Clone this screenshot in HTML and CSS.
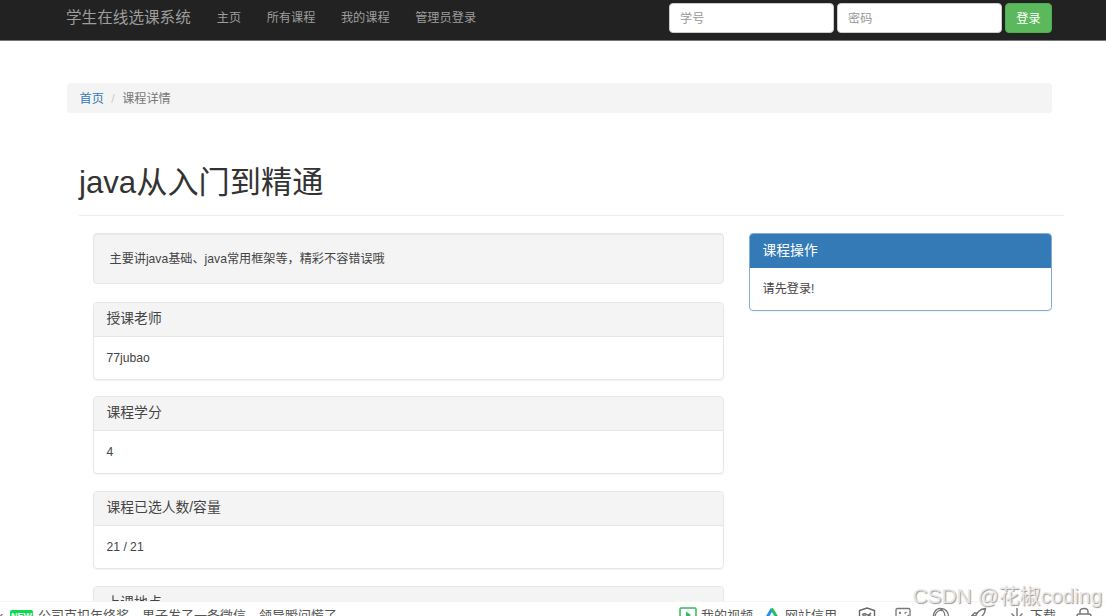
FILE: index.html
```
<!DOCTYPE html>
<html lang="zh-CN">
<head>
<meta charset="UTF-8">
<title>学生在线选课系统</title>
<link rel="stylesheet" href="styles.css">
</head>
<body>

<!-- Navigation -->
<nav class="navbar">
  <a class="brand" href="#">学生在线选课系统</a>
  <ul class="nav-links">
    <li><a href="#">主页</a></li>
    <li><a href="#">所有课程</a></li>
    <li><a href="#">我的课程</a></li>
    <li><a href="#">管理员登录</a></li>
  </ul>
  <form class="login-form">
    <input type="text" class="form-control" placeholder="学号">
    <input type="password" class="form-control" placeholder="密码">
    <button type="button" class="btn">登录</button>
  </form>
</nav>

<main class="page">
  <div class="breadcrumb">
    <a href="#">首页</a><span class="divider">/</span><span>课程详情</span>
  </div>

  <h1 class="page-header">java从入门到精通</h1>

  <div class="row">
    <!-- Course info -->
    <div class="course">
      <div class="well">主要讲java基础、java常用框架等，精彩不容错误哦</div>
      <div class="panel">
        <h3 class="panel-heading">授课老师</h3>
        <div class="panel-body">77jubao</div>
      </div>
      <div class="panel">
        <h3 class="panel-heading">课程学分</h3>
        <div class="panel-body">4</div>
      </div>
      <div class="panel">
        <h3 class="panel-heading">课程已选人数/容量</h3>
        <div class="panel-body">21 / 21</div>
      </div>
      <div class="panel">
        <h3 class="panel-heading">上课地点</h3>
        <div class="panel-body"></div>
      </div>
    </div>

    <!-- Course actions -->
    <div class="side">
      <div class="panel panel-primary">
        <h3 class="panel-heading">课程操作</h3>
        <div class="panel-body">请先登录!</div>
      </div>
    </div>
  </div>
</main>

<!-- Browser status bar -->
<footer class="statusbar">
  <div class="news">
    <span class="arrow">‹</span>
    <span class="new-tag">NEW</span>
    <span>公司克扣年终奖，男子发了一条微信，领导瞬间慌了</span>
  </div>
  <div class="tools">
    <svg class="tool-video" width="18" height="16" viewBox="0 0 18 16" fill="none" stroke="#2dbe60" stroke-width="1.5"><rect x="1" y="1" width="16" height="14" rx="1"/><path d="M7 4.500l5 3.500-5 3.500z" fill="#2dbe60" stroke="none"/></svg>
    <span class="tool-label label-video">我的视频</span>
    <svg class="tool-credit" width="14" height="16" viewBox="0 0 14 16" fill="none" stroke-width="3"><path d="M1 12L7 2" stroke="#2b8df0"/><path d="M6.500 1.500L13 12" stroke="#25c063"/></svg>
    <span class="tool-label label-credit">网站信用</span>
    <svg class="tool-shield" width="18" height="18" viewBox="0 0 18 18" fill="none" stroke="#666" stroke-width="1.400"><path d="M9 1l7.500 2.500v6c0 3-3.500 5.500-7.500 7.500-4-2-7.500-4.500-7.500-7.500v-6z"/><path d="M4.500 8.500c0-2.500 3-2 4-1s3 .5 4.500-1.500M5 9h3M10 9h3"/></svg>
    <svg class="tool-image" width="16" height="16" viewBox="0 0 16 16" fill="none" stroke="#777" stroke-width="1.300"><rect x="1" y="1.500" width="14" height="13" rx="1.500"/><path d="M2 13l4-3 3 2 5-4"/><circle cx="5" cy="6" r=".5"/><path d="M9.500 6.500l2-1.500"/></svg>
    <svg class="tool-ie" width="18" height="16" viewBox="0 0 18 16" fill="none" stroke="#777" stroke-width="1.300"><path d="M3 13C-1 7 4 1 9 1.500c5 0 7.500 4 7.500 8M3 9C4 5 7 3 10 3.500M8 2c3 1 5 4 5 8"/></svg>
    <svg class="tool-rocket" width="16" height="16" viewBox="0 0 16 16" fill="none" stroke="#777" stroke-width="1.400"><path d="M14.500 1.500C10 2 6 5 4.500 9.500L7 12c4-2 7-5 7.500-10.500zM7 6H3.500L1 8.500l4 .5M11 9.500v3L8 14"/></svg>
    <svg class="tool-download" width="14" height="16" viewBox="0 0 14 16" fill="none" stroke="#777" stroke-width="1.400"><path d="M7 1v11M1.500 6.500L7 12l5.500-5.500"/></svg>
    <span class="tool-label label-download">下载</span>
    <svg class="tool-lock" width="16" height="16" viewBox="0 0 16 16" fill="none" stroke="#777" stroke-width="1.400"><path d="M4 7V4.500Q4 1.500 8 1.500t4 3V7"/><rect x="1" y="7" width="14" height="8" rx="2"/></svg>
  </div>
</footer>

<div class="watermark">CSDN @花椒coding</div>

</body>
</html>
```
FILE: styles.css
```
* {
  box-sizing: border-box;
}
body {
  font-family: "Liberation Sans", "Noto Sans CJK SC", sans-serif;
  font-size: 12.15px;
  line-height: 17px;
  color: #444;
  background-color: #fff;
  margin: 0;
  height: 616px;
  overflow: hidden;
  display: flex;
  flex-direction: column;
}
a {
  color: #337ab7;
  text-decoration: none;
}

/* Navbar */
.navbar {
  flex: none;
  display: flex;
  height: 41px;
  padding: 0 54px 0 66px;
  background-color: #222;
  border-bottom: 1px solid #777;
}
.navbar a {
  color: #9d9d9d;
}
.brand {
  font-size: 15.6px;
  line-height: 36px;
}
.nav-links {
  display: flex;
  gap: 25.5px;
  list-style: none;
  margin: 0 0 0 26px;
  padding: 0;
  font-size: 12.2px;
  line-height: 37px;
}
.login-form {
  display: flex;
  gap: 3px;
  margin-left: auto;
  padding-top: 3px;
}
.form-control {
  width: 165px;
  height: 30px;
  padding: 1px 10px 0;
  font: inherit;
  border: 1px solid #ccc;
  border-radius: 4px;
}
.form-control::placeholder {
  color: #999;
}
.btn {
  width: 47px;
  height: 30px;
  padding: 2px 0 0;
  font: inherit;
  color: #fff;
  background-color: #5cb85c;
  border: 1px solid #4cae4c;
  border-radius: 4px;
}

/* Page */
.page {
  height: 560px;
  overflow: hidden;
  padding: 42px 54px 0 67px;
}
.breadcrumb {
  height: 30px;
  padding: 0 12.5px;
  line-height: 32px;
  color: #777;
  background-color: #f4f4f4;
  border-radius: 4px;
}
.divider {
  padding: 0 7.5px;
  color: #ccc;
}
.page-header {
  height: 69px;
  margin: 34px -12px 17px 12px;
  color: #333;
  font-size: 31.2px;
  font-weight: 400;
  line-height: 71px;
  border-bottom: 1px solid #eee;
}
.row {
  display: flex;
  justify-content: space-between;
  padding-left: 26px;
}
.course {
  width: 631px;
}
.side {
  width: 303px;
}
.well {
  height: 51px;
  margin-bottom: 17.7px;
  padding: 17px 16px 0 15.5px;
  background-color: #f4f4f4;
  border: 1px solid #e6e6e6;
  border-radius: 4px;
  box-shadow: inset 0 1px 1px rgba(0, 0, 0, .05);
}
.panel {
  height: 78px;
  margin-bottom: 16.8px;
  border: 1px solid #e6e6e6;
  border-radius: 4px;
  box-shadow: 0 1px 1px rgba(0, 0, 0, .05);
}
.panel-heading {
  height: 34px;
  margin: 0;
  padding-left: 12.5px;
  font-size: 13.8px;
  font-weight: 400;
  line-height: 32px;
  background-color: #f4f4f4;
  border-bottom: 1px solid #e6e6e6;
  border-radius: 3px 3px 0 0;
}
.panel-body {
  padding: 13px 12.5px;
}
.panel-primary {
  border-color: #7fadd4;
}
.panel-primary .panel-heading {
  line-height: 33px;
  color: #fff;
  background-color: #337ab7;
  border-color: #337ab7;
}

/* Status bar */
.statusbar {
  flex: none;
  display: flex;
  justify-content: space-between;
  height: 15px;
  overflow: hidden;
  padding: 0 14px 0 0;
  color: #555;
  line-height: 18px;
  border-top: 1px solid #f4f4f4;
}
.news {
  display: flex;
  padding-top: 5px;
  font-size: 13px;
}
.arrow {
  width: 10px;
  margin-left: -1px;
}
.new-tag {
  width: 23px;
  height: 13px;
  margin: 3px 5px 0 1px;
  color: #fff;
  background-color: #0cda50;
  border-radius: 2px;
  font-size: 9px;
  font-weight: 700;
  line-height: 13px;
  text-align: center;
}
.tools {
  display: flex;
  padding-top: 5px;
}
.tools svg {
  flex: none;
}
.tool-label {
  font-size: 13px;
  line-height: 18px;
  white-space: nowrap;
}
.label-video {
  margin: 0 12px 0 4px;
}
.label-credit {
  margin: 0 21px 0 6px;
}
.tool-shield {
  margin-right: 19px;
}
.tool-image {
  margin-right: 21px;
}
.tool-ie {
  margin-right: 21px;
}
.tool-rocket {
  margin-right: 23px;
}
.tool-download {
  margin-right: 6px;
}
.label-download {
  margin-right: 20px;
}

/* Overlay text on the corner of the page */
.watermark {
  position: absolute;
  right: 4px;
  bottom: 5px;
  color: rgba(235, 235, 235, .9);
  font-size: 20.9px;
  line-height: 30px;
  text-shadow: 1px 1px 1px #999;
}
```
